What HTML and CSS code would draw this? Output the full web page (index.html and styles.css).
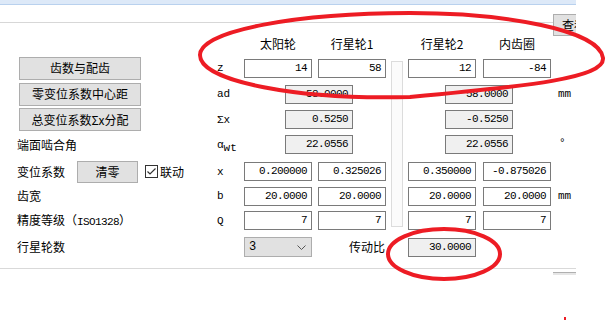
FILE: index.html
```html
<!DOCTYPE html>
<html lang="zh">
<head>
    <meta charset="UTF-8">
    <title>行星齿轮参数</title>
    <link rel="stylesheet" href="styles.css">
</head>
<body>
    <div class="window">
        <div class="title-strip"></div>
        <div class="toolbar">
            <div class="toolbar-line"></div>
            <button class="btn btn-query">查看</button>
        </div>

        <div class="form">
            <!-- 表头 -->
            <div class="head col-a">太阳轮</div>
            <div class="head col-b">行星轮1</div>
            <div class="head col-c">行星轮2</div>
            <div class="head col-d">内齿圈</div>

            <div class="sep"></div>

            <!-- 齿数 -->
            <div class="left"><button class="btn btn-wide">齿数与配齿</button></div>
            <div class="sym">z</div>
            <div class="field col-a">14</div>
            <div class="field col-b">58</div>
            <div class="field col-c">12</div>
            <div class="field col-d">-84</div>

            <!-- 中心距 -->
            <div class="left"><button class="btn btn-wide">零变位系数中心距</button></div>
            <div class="sym">ad</div>
            <div class="field ro col-ab">58.0000</div>
            <div class="field ro col-cd">58.0000</div>
            <div class="unit">mm</div>

            <!-- 总变位系数 -->
            <div class="left"><button class="btn btn-wide">总变位系数Σx分配</button></div>
            <div class="sym">Σx</div>
            <div class="field ro col-ab">0.5250</div>
            <div class="field ro col-cd">-0.5250</div>

            <!-- 啮合角 -->
            <div class="left">端面啮合角</div>
            <div class="sym">α<span class="sub">wt</span></div>
            <div class="field ro col-ab">22.0556</div>
            <div class="field ro col-cd">22.0556</div>
            <div class="unit deg">°</div>

            <!-- 变位系数 -->
            <div class="left shift-row">
                <span>变位系数</span>
                <button class="btn btn-clear">清零</button>
                <svg class="check" width="13" height="13" viewBox="0 0 13 13">
                    <rect x="0.5" y="0.5" width="12" height="12" fill="#fff" stroke="#333"/>
                    <path d="M2.5 6.5 L5 9 L10.5 3.5" fill="none" stroke="#333" stroke-width="1.2"/>
                </svg>
                <span class="check-label">联动</span>
            </div>
            <div class="sym">x</div>
            <div class="field col-a">0.200000</div>
            <div class="field col-b">0.325026</div>
            <div class="field col-c">0.350000</div>
            <div class="field col-d">-0.875026</div>

            <!-- 齿宽 -->
            <div class="left">齿宽</div>
            <div class="sym">b</div>
            <div class="field col-a">20.0000</div>
            <div class="field col-b">20.0000</div>
            <div class="field col-c">20.0000</div>
            <div class="field col-d">20.0000</div>
            <div class="unit">mm</div>

            <!-- 精度 -->
            <div class="left">精度等级（<span class="latin">ISO1328</span>）</div>
            <div class="sym">Q</div>
            <div class="field col-a">7</div>
            <div class="field col-b">7</div>
            <div class="field col-c">7</div>
            <div class="field col-d">7</div>

            <!-- 行星轮数 -->
            <div class="left">行星轮数</div>
            <div class="select col-a">
                <span>3</span>
                <svg width="9" height="5" viewBox="0 0 9 5"><path d="M0.5 0.5 L4.5 4.5 L8.5 0.5" fill="none" stroke="#555"/></svg>
            </div>
            <div class="ratio-label col-b">传动比</div>
            <div class="field ro col-c">30.0000</div>
        </div>

        <div class="footer-line"></div>
        <div class="footer-stub"></div>
    </div>

    <!-- 红色标注圈 -->
    <svg class="marks" width="613" height="320" viewBox="0 0 613 320">
        <path d="M200 55 C200 30 300 13 410 13 C505 13 600 30 603 58 C605 78 530 86 410 97 C300 100 200 82 200 55 Z"
              fill="none" stroke="#ed1c24" stroke-width="4"/>
        <ellipse cx="444" cy="254" rx="56" ry="25" fill="none" stroke="#ed1c24" stroke-width="4"/>
        <rect x="564" y="317" width="2" height="3" fill="#ed1c24"/>
    </svg>
</body>
</html>
```

FILE: styles.css
```css
body {
    margin: 0;
    width: 613px;
    height: 320px;
    overflow: hidden;
    position: relative;
    background: #fff;
    font-family: "Noto Sans CJK SC", sans-serif;
    font-size: 12px;
    color: #000;
}

.window {
    width: 576px;
    overflow: hidden;
}

.title-strip {
    height: 4px;
    background: #dde9f8;
    border-bottom: 1px solid #b9d1ee;
}

.toolbar {
    display: flex;
    align-items: flex-start;
    margin-top: 9px;
    height: 18px;
}

.toolbar-line {
    flex: none;
    width: 553px;
    height: 1px;
    margin-top: 8px;
    background: #d7d7d7;
}

.btn {
    box-sizing: border-box;
    background: #e1e1e1;
    border: 1px solid #adadad;
    font-family: "Noto Sans CJK SC", sans-serif;
    font-size: 12px;
    color: #000;
    padding: 0;
    line-height: 1;
}

.btn-query {
    flex: none;
    width: 50px;
    height: 22px;
    text-align: left;
    padding-left: 8px;
}

.form {
    display: grid;
    grid-template-columns: 217px 27px 68px 6px 68px 22px 68px 7px 68px 1fr;
    grid-template-rows: 24px 24px 28px 23px 27px 27px 22px 27px 26px;
    align-items: center;
}

.head {
    text-align: center;
    line-height: 14px;
}

.col-a { grid-column: 3; }
.col-b { grid-column: 5; }
.col-c { grid-column: 7; }
.col-d { grid-column: 9; }

.col-ab {
    grid-column: 3 / 6;
    width: 68px;
    margin-left: 41px;
}

.col-cd {
    grid-column: 7 / 10;
    width: 68px;
    margin-left: 37px;
}

.left {
    grid-column: 1;
    padding-left: 17px;
    line-height: 14px;
}

.btn-wide {
    margin-left: 2px;
    width: 122px;
    height: 23px;
}

.shift-row {
    display: flex;
    align-items: center;
}

.btn-clear {
    width: 61px;
    height: 22px;
    margin-left: 12px;
}

.check {
    margin-left: 7px;
    flex: none;
}

.check-label {
    margin-left: 2px;
}

.latin {
    font-family: "Liberation Mono", monospace;
    font-size: 11px;
    letter-spacing: -0.6px;
}

.sym {
    grid-column: 2;
    font-family: "Liberation Mono", monospace;
    font-size: 11px;
    line-height: 14px;
}

.sym .sub {
    position: relative;
    top: 3px;
}

.field {
    box-sizing: border-box;
    height: 19px;
    border: 1px solid #7a7a7a;
    background: #fff;
    font-family: "Liberation Mono", monospace;
    font-size: 11px;
    letter-spacing: -0.6px;
    line-height: 17px;
    text-align: right;
    padding-right: 4px;
}

.field.ro {
    background: #f0f0f0;
}

.unit {
    grid-column: 10;
    padding-left: 7px;
    font-family: "Liberation Mono", monospace;
    font-size: 11px;
    line-height: 14px;
}

.unit.deg {
    padding-left: 8px;
    margin-top: -4px;
}

.sep {
    grid-column: 6;
    grid-row: 2 / 9;
    align-self: stretch;
    margin: 5px 0 7px 5px;
    width: 12px;
    box-sizing: border-box;
    border: 1px solid #dcdcdc;
    background: #fbfbfb;
}

.select {
    box-sizing: border-box;
    height: 20px;
    display: flex;
    justify-content: space-between;
    align-items: center;
    padding: 0 5px 0 4px;
    background: #e1e1e1;
    border: 1px solid #adadad;
    font-family: "Liberation Mono", monospace;
    font-size: 12px;
}

.ratio-label {
    justify-self: end;
    margin-right: 1px;
    line-height: 14px;
}

.footer-line {
    margin-top: 8px;
    height: 1px;
    background: #d9d9d9;
}

.footer-stub {
    margin-top: 3px;
    margin-left: 553px;
    width: 40px;
    height: 2px;
    background: #e6e6e6;
    border-top: 1px solid #b0b0b0;
}

.marks {
    position: absolute;
    top: 0;
    left: 0;
    pointer-events: none;
}
```
